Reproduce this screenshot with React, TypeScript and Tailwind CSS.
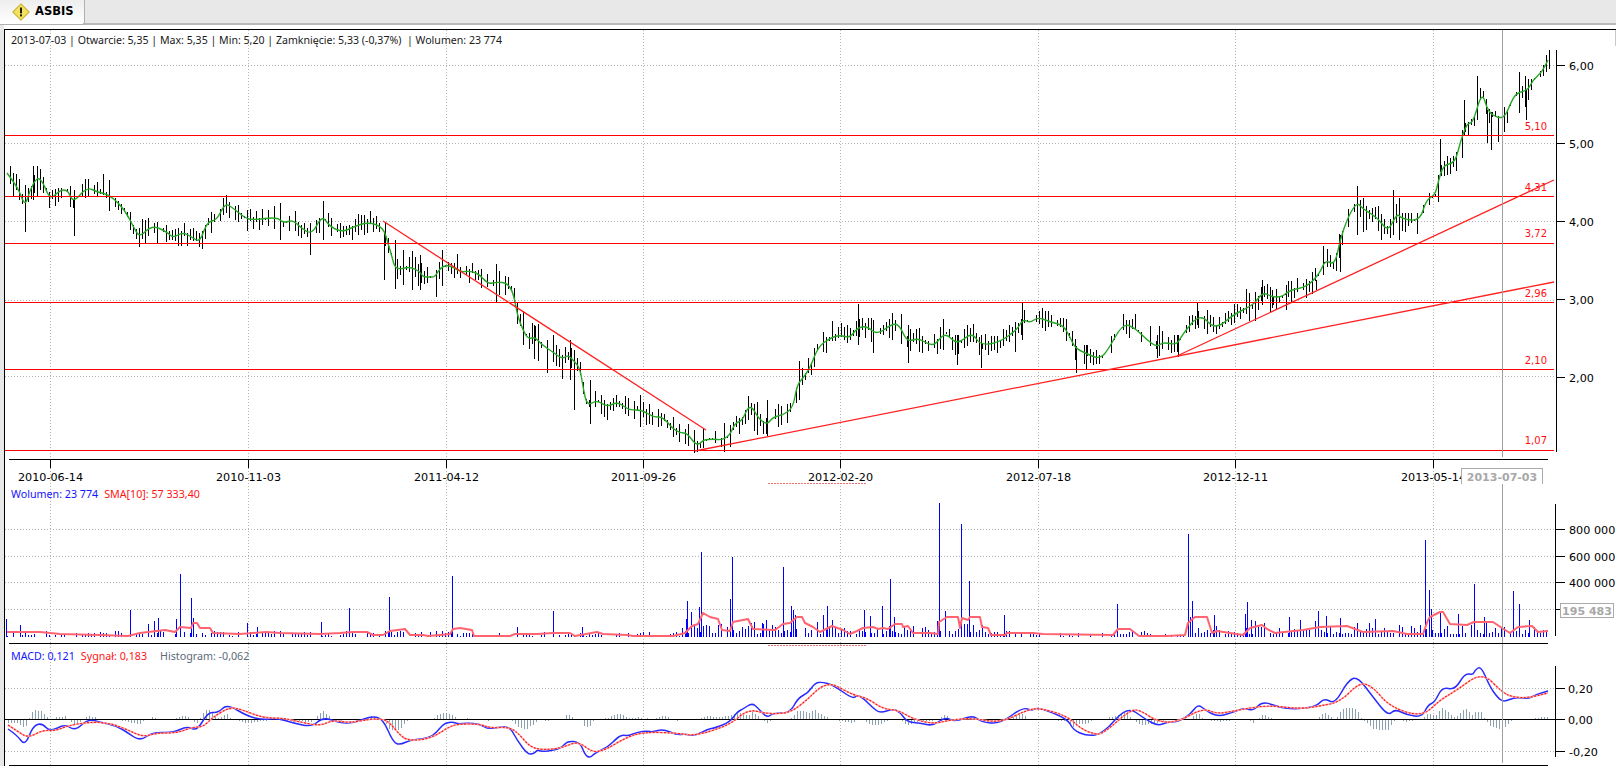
const SMA =
  "7,173 18,187 25,207 30,190 37,177 43,182 50,200 60,190 68,190 73,203 87,187 97,192 110,195 125,210 135,230 140,237 152,225 167,232 173,238 183,232 193,238 200,242 207,222 217,220 225,203 233,208 245,218 253,220 277,217 283,223 293,220 300,227 312,235 322,215 330,227 343,232 353,227 368,222 383,227 388,243 392,257 395,268 402,269 408,267 415,269 420,272 423,277 430,277 435,277 440,268 447,265 455,268 460,272 472,271 480,275 488,284 497,282 507,283 513,292 516,307 518,317 523,330 528,339 535,337 542,345 553,352 562,359 568,355 573,360 580,368 583,387 587,406 597,400 607,407 617,402 625,407 630,410 642,410 653,417 663,417 672,428 680,433 687,433 695,444 700,444 703,440 713,439 722,440 730,435 735,423 742,421 748,407 753,408 758,418 767,425 773,417 783,415 793,408 797,385 803,378 810,368 818,347 830,338 840,335 850,338 857,328 867,326 877,335 893,323 900,326 907,342 918,338 928,344 935,345 945,332 957,345 972,332 980,345 998,343 1017,330 1023,319 1030,323 1038,317 1050,322 1063,325 1070,337 1075,348 1087,354 1100,359 1108,350 1123,323 1135,328 1147,340 1157,347 1163,342 1177,345 1182,335 1200,313 1215,330 1233,315 1247,308 1255,303 1263,292 1272,297 1282,297 1290,290 1307,287 1320,273 1325,260 1335,265 1340,240 1348,217 1357,202 1363,209 1378,218 1388,232 1397,213 1402,219 1420,221 1426,200 1435,195 1438,183 1443,165 1455,163 1460,143 1467,123 1473,123 1482,91 1488,112 1498,118 1505,117 1512,100 1517,93 1528,90 1533,80 1542,72 1548,60";

const VOL_SMA =
  "7,632 40,632 60,634 100,635 128,636 140,633 165,630 175,632 180,627 191,628 193,623 197,623 200,628 210,628 213,633 240,634 266,632 280,633 320,634 340,633 353,632 367,632 373,635 383,635 390,631 405,629 410,635 423,635 428,636 440,635 450,634 453,629 460,628 472,630 474,636 510,636 515,634 537,634 553,633 570,633 575,636 597,632 603,634 627,635 633,636 673,636 685,633 692,626 698,624 703,613 710,617 718,619 722,630 730,631 733,622 748,619 753,629 775,630 783,624 790,623 797,617 802,617 805,623 813,627 820,632 832,626 843,630 850,634 857,631 863,628 873,627 878,629 883,628 888,629 895,624 902,624 903,627 908,626 913,633 930,633 938,634 939,622 947,617 958,617 960,628 962,618 968,620 970,617 980,617 982,627 988,628 991,635 1005,635 1007,633 1033,633 1043,634 1113,635 1118,629 1130,629 1139,636 1167,636 1185,635 1188,623 1195,617 1207,617 1212,633 1217,631 1243,635 1250,628 1262,625 1267,629 1275,633 1303,630 1320,627 1347,626 1363,632 1393,631 1407,634 1423,634 1428,620 1430,617 1440,612 1443,612 1450,624 1467,625 1474,622 1493,622 1502,628 1510,633 1518,627 1532,626 1538,632 1548,631";

const MACD =
  "8,729 17,735 25,746 33,726 42,723 50,732 65,724 75,731 88,719 100,722 117,726 128,733 140,741 153,732 173,733 187,726 197,731 208,712 218,713 227,704 247,716 263,720 277,718 293,723 312,727 323,717 340,723 353,723 372,716 383,719 393,742 400,745 410,740 423,739 433,736 440,728 445,723 453,722 458,724 467,723 480,724 488,729 500,727 510,727 517,740 528,755 535,753 537,750 545,752 562,748 567,741 580,742 585,755 590,758 595,753 608,747 618,737 623,735 628,736 638,732 647,731 653,732 663,729 677,735 685,734 695,736 708,729 715,728 730,722 737,712 743,709 752,703 758,708 767,718 773,713 790,713 798,698 808,693 815,683 822,682 833,685 853,699 857,695 863,698 873,708 880,713 893,709 900,712 907,722 920,723 933,726 945,717 955,722 973,715 981,722 1000,724 1023,707 1032,711 1038,707 1068,719 1073,730 1087,736 1103,734 1127,706 1145,719 1158,726 1167,722 1177,722 1190,715 1198,704 1205,710 1218,717 1233,712 1245,708 1253,711 1263,701 1280,708 1300,709 1317,706 1324,698 1335,704 1347,682 1357,676 1373,697 1388,716 1395,709 1407,715 1422,717 1428,705 1435,702 1442,687 1455,690 1465,673 1473,675 1475,670 1481,666 1490,687 1498,698 1504,702 1515,697 1528,699 1535,695 1548,691";

const SIGNAL =
  "8,725 17,731 28,738 43,730 55,731 67,726 88,722 110,723 128,730 143,737 157,733 177,733 193,727 203,727 213,717 230,707 243,710 263,718 283,718 300,722 320,726 333,720 350,723 370,719 383,719 390,723 400,735 407,740 423,740 437,735 447,728 457,724 480,724 490,728 510,727 520,735 530,747 543,750 562,748 578,741 593,753 607,749 625,738 643,732 677,733 695,736 730,725 748,709 768,714 790,713 807,700 820,687 830,684 837,686 853,695 867,698 883,709 898,710 913,719 933,724 950,720 973,718 1000,723 1027,710 1040,708 1067,716 1080,728 1093,734 1103,734 1130,710 1140,710 1158,722 1178,722 1203,708 1217,714 1233,711 1267,705 1300,709 1320,706 1340,702 1360,682 1373,687 1390,707 1422,717 1440,700 1457,690 1482,672 1502,692 1512,697 1528,698 1548,693";

// x,top,bottom of price bars that stick out of the noise
const PRICE_SPIKES = [
  [25, 185, 232], [33, 166, 200], [37, 166, 196], [74, 190, 236], [280, 205, 240], [323, 201, 240],
  [384, 232, 280], [395, 240, 289], [420, 255, 290], [534, 325, 359], [547, 340, 373], [553, 335, 362],
  [570, 340, 380], [574, 350, 410], [590, 380, 424], [640, 395, 427], [694, 430, 453], [703, 429, 448],
  [748, 396, 420], [767, 400, 436], [799, 361, 400], [858, 304, 345], [873, 320, 353], [908, 325, 363],
  [943, 319, 350], [957, 335, 365], [981, 335, 368], [1022, 303, 340], [1076, 346, 373], [1086, 345, 369],
  [1157, 335, 358], [1178, 335, 357], [1197, 303, 325], [1262, 280, 305], [1272, 290, 308], [1286, 285, 310],
  [1316, 280, 290], [1323, 246, 275], [1340, 235, 272], [1357, 186, 235], [1363, 198, 232], [1393, 190, 235],
  [1399, 198, 240], [1440, 139, 172], [1462, 130, 158], [1464, 100, 135], [1477, 76, 110], [1487, 110, 143],
  [1491, 112, 150], [1498, 118, 142], [1526, 90, 120], [1549, 50, 62], [1546, 55, 72],
];

// x,top of the tall volume bars
const VOL_SPIKES = [
  [6, 619], [20, 625], [130, 610], [148, 624], [154, 621], [158, 618], [176, 619], [180, 574], [191, 598],
  [193, 618], [247, 623], [257, 627], [321, 622], [349, 608], [389, 597], [452, 576], [517, 627], [553, 611],
  [582, 627], [686, 619], [687, 601], [691, 612], [699, 607], [701, 552], [730, 599], [732, 557], [754, 622],
  [762, 623], [766, 620], [783, 567], [791, 606], [793, 610], [795, 615], [823, 615], [827, 606], [864, 610],
  [870, 616], [882, 606], [890, 579], [894, 617], [939, 503], [945, 611], [961, 524], [969, 581], [1004, 615],
  [1117, 604], [1188, 534], [1190, 617], [1192, 601], [1214, 615], [1245, 614], [1247, 602], [1251, 620],
  [1289, 617], [1318, 611], [1326, 616], [1340, 618], [1425, 540], [1429, 590], [1431, 609], [1440, 612],
  [1458, 614], [1474, 584], [1484, 617], [1513, 591], [1519, 604], [1529, 620],
];

const V_GRID = [50, 248, 446, 643, 840, 1038, 1235, 1433];
const DATES = ["2010-06-14", "2010-11-03", "2011-04-12", "2011-09-26", "2012-02-20", "2012-07-18", "2012-12-11", "2013-05-14"];
const LEVELS = [
  { y: 135, label: "5,10", ly: 130 },
  { y: 196, label: "4,31", ly: 191 },
  { y: 243, label: "3,72", ly: 237 },
  { y: 302, label: "2,96", ly: 297 },
  { y: 369, label: "2,10", ly: 364 },
  { y: 450, label: "1,07", ly: 444 },
];

function parse(s: string) {
  return s.split(" ").map((p) => p.split(",").map(Number));
}

function at(pts: number[][], x: number) {
  if (x <= pts[0][0]) return pts[0][1];
  for (let i = 1; i < pts.length; i++) {
    if (x <= pts[i][0]) {
      const [x0, y0] = pts[i - 1];
      const [x1, y1] = pts[i];
      return y0 + ((y1 - y0) * (x - x0)) / (x1 - x0);
    }
  }
  return pts[pts.length - 1][1];
}

// rounds the corners of a polyline with quadratic segments through the midpoints
function smooth(s: string) {
  const p = parse(s);
  let d = `M${p[0][0]} ${p[0][1]}`;
  for (let i = 1; i < p.length - 1; i++) {
    const mx = (p[i][0] + p[i + 1][0]) / 2;
    const my = (p[i][1] + p[i + 1][1]) / 2;
    d += `Q${p[i][0]} ${p[i][1]} ${mx} ${my}`;
  }
  const last = p[p.length - 1];
  return `${d}L${last[0]} ${last[1]}`;
}

function rng(seed: number) {
  let s = seed;
  return () => {
    s = (s * 16807) % 2147483647;
    return s / 2147483647;
  };
}

function priceBars() {
  const pts = parse(SMA);
  const r = rng(4711);
  let d = "";
  for (let x = 7; x <= 1549; x += 3) {
    if (r() < 0.14) continue;
    const y = at(pts, x);
    const quiet = r() < 0.08;
    const k = r() < 0.18 ? 1.7 : 1;
    const up = quiet ? 1 : (1 + r() * 11) * k;
    const down = quiet ? 1 : (1 + r() * 12) * k;
    // nothing but the low itself reaches under the 1,07 line
    d += `M${x + 0.5} ${Math.round(y - up)}V${Math.min(452, Math.round(y + down))}`;
  }
  for (const [x, a, b] of PRICE_SPIKES) d += `M${x + 0.5} ${a}V${b}`;
  return d;
}

function volumeBars() {
  const r = rng(99);
  let d = "";
  for (let x = 7; x <= 1548; x += 3) {
    const dense = (x > 680 && x < 1000) || x > 1192;
    const sparse = x > 1040 && x < 1110;
    if (r() > (dense ? 0.92 : sparse ? 0.35 : 0.6)) continue;
    const h = dense ? 3 + r() * r() * 16 : 1 + r() * 5;
    d += `M${x + 0.5} ${Math.round(637 - h)}V637`;
  }
  for (const [x, t] of VOL_SPIKES) d += `M${x + 0.5} ${t}V637`;
  return d;
}

function histogramBars() {
  const m = parse(MACD);
  const s = parse(SIGNAL);
  let d = "";
  for (let x = 8; x <= 1548; x += 3) {
    const h = at(s, x) - at(m, x);
    if (Math.abs(h) < 1) continue;
    const top = Math.round(719 - Math.max(-11, Math.min(11, h)));
    d += `M${x + 0.5} 719V${top}`;
  }
  return d;
}

function HLine({ y, x1 = 5, x2 = 1554, className = "stroke-[#b4b4b4]", dash }: { y: number; x1?: number; x2?: number; className?: string; dash?: string }) {
  return <line x1={x1} x2={x2} y1={y + 0.5} y2={y + 0.5} className={className} strokeDasharray={dash} shapeRendering="crispEdges" />;
}

function VLine({ x, y1, y2, className = "stroke-black", dash }: { x: number; y1: number; y2: number; className?: string; dash?: string }) {
  return <line x1={x + 0.5} x2={x + 0.5} y1={y1} y2={y2} className={className} strokeDasharray={dash} shapeRendering="crispEdges" />;
}

function Grid({ y1, y2, rows }: { y1: number; y2: number; rows: number[] }) {
  return (
    <>
      {rows.map((y) => (
        <HLine key={y} y={y} dash="1 2" />
      ))}
      {V_GRID.map((x) => (
        <VLine key={x} x={x} y1={y1} y2={y2} className="stroke-[#b4b4b4]" dash="1 2" />
      ))}
    </>
  );
}

function Tick({ y, label, x = 1569 }: { y: number; label?: string; x?: number }) {
  return (
    <>
      <HLine y={y} x1={1556} x2={1565} className="stroke-black" />
      {label && (
        <text x={x} y={y + 4.5} className="fill-black font-['DejaVu_Sans'] text-[11.2px]">
          {label}
        </text>
      )}
    </>
  );
}

function PricePane() {
  return (
    <div className="relative h-[456px]">
      <svg viewBox="5 30 1611 456" className="absolute inset-0 block h-full w-full">
        <Grid y1={30} y2={486} rows={[65, 143, 221, 300, 376]} />
        <path d={priceBars()} className="fill-none stroke-black" shapeRendering="crispEdges" />
        <path d={smooth(SMA)} className="fill-none stroke-[#26a826] stroke-[1.4]" strokeLinejoin="round" />
        {LEVELS.map((l) => (
          <HLine key={l.y} y={l.y} className="stroke-[#ff0000]" />
        ))}
        <line x1="383" y1="221" x2="706" y2="430" className="stroke-[#ff2020] stroke-[1.3]" />
        <line x1="695" y1="451" x2="1554" y2="282" className="stroke-[#ff2020] stroke-[1.3]" />
        <line x1="1177" y1="356" x2="1554" y2="180" className="stroke-[#ff2020] stroke-[1.3]" />
        {LEVELS.map((l) => (
          <text key={l.label} x={1547} y={l.ly} textAnchor="end" className="fill-[#ff1010] font-['DejaVu_Sans'] text-[10px]">
            {l.label}
          </text>
        ))}
        <VLine x={1502} y1={30} y2={457} className="stroke-[#a0a0a0]" />

        <VLine x={1556} y1={50} y2={452} />
        <Tick y={65} label="6,00" />
        <Tick y={143} label="5,00" />
        <Tick y={221} label="4,00" />
        <Tick y={299} label="3,00" />
        <Tick y={377} label="2,00" />

        <HLine y={459} x1={9} x2={1548} className="stroke-black" />
        {V_GRID.map((x, i) => (
          <g key={x}>
            <VLine x={x} y1={459} y2={468} />
            <text x={x + 0.5} y={481} textAnchor="middle" className="fill-black font-['DejaVu_Sans'] text-[11.2px]">
              {DATES[i]}
            </text>
          </g>
        ))}
        <HLine y={483} x1={768} x2={867} className="stroke-[#f07070]" dash="2 1" />
        <rect x="1461.5" y="468.5" width="81" height="16" className="fill-white stroke-[#aaaaaa]" />
        <line x1="1461" y1="484.5" x2="1543" y2="484.5" className="stroke-white" />
        <VLine x={1502} y1={484} y2={486} className="stroke-[#a0a0a0]" />
        <text x={1502} y={481} textAnchor="middle" className="fill-[#a8a8a8] font-['DejaVu_Sans'] text-[11px] font-bold">
          2013-07-03
        </text>
        <rect x="1615" y="30" width="1" height="16" className="fill-[#c8c8c8]" />
      </svg>
      <div className="relative whitespace-pre pl-[6px] pt-[3px] font-['Noto_Sans'] text-[10.6px] leading-[14px] text-[#1a1a1a]">
        2013-07-03 | Otwarcie: 5,35 | Max: 5,35 | Min: 5,20 | Zamknięcie: 5,33 (-0,37%)  | Wolumen: 23 774
      </div>
    </div>
  );
}

function VolumePane() {
  return (
    <div className="relative h-[158px]">
      <svg viewBox="5 486 1611 158" className="absolute inset-0 block h-full w-full">
        <Grid y1={486} y2={644} rows={[529, 556, 582, 609]} />
        <path d={volumeBars()} className="fill-none stroke-[#0000ff]" shapeRendering="crispEdges" />
        <polyline points={VOL_SMA} className="fill-none stroke-[#ff6470] stroke-2" strokeLinejoin="round" />
        <VLine x={1502} y1={486} y2={644} className="stroke-[#a0a0a0]" />
        <VLine x={1555} y1={504} y2={636} />
        <Tick y={529} label="800 000" />
        <Tick y={556} label="600 000" />
        <Tick y={582} label="400 000" />
        <Tick y={609} />
        <rect x="1560.5" y="603.5" width="53" height="14" className="fill-white stroke-[#aaaaaa]" />
        <text x={1587} y={614.5} textAnchor="middle" className="fill-[#a8a8a8] font-['DejaVu_Sans'] text-[11px] font-bold">
          195 483
        </text>
        <HLine y={643} x1={9} x2={1548} className="stroke-black" />
      </svg>
      <div className="relative flex gap-[6px] pl-[6px] pt-[1px] font-['Noto_Sans'] text-[10.7px] leading-[14px]">
        <span className="text-[#1414ff]">Wolumen: 23 774</span>
        <span className="text-[#ff1414]">SMA[10]: 57 333,40</span>
      </div>
    </div>
  );
}

function MacdPane() {
  return (
    <div className="relative h-[122px]">
      <svg viewBox="5 644 1611 122" className="absolute inset-0 block h-full w-full">
        <Grid y1={644} y2={765} rows={[688, 751]} />
        <HLine y={645} x1={768} x2={867} className="stroke-[#f07070]" dash="2 1" />
        <path d={histogramBars()} className="fill-none stroke-[#8ba2ae]" shapeRendering="crispEdges" />
        <HLine y={719} x1={5} x2={1556} className="stroke-black" />
        <path d={smooth(MACD)} className="fill-none stroke-[#2a2aff] stroke-[1.5]" strokeLinejoin="round" />
        <path d={smooth(SIGNAL)} className="fill-none stroke-[#ffb0b0] stroke-[1.6]" strokeLinejoin="round" />
        <path d={smooth(SIGNAL)} className="fill-none stroke-[#ff1e1e] stroke-[1.2]" strokeDasharray="2 1.5" strokeLinejoin="round" />
        <VLine x={1502} y1={644} y2={763} className="stroke-[#a0a0a0]" />
        <VLine x={1555} y1={666} y2={757} />
        <Tick y={688} label="0,20" x={1568} />
        <Tick y={719} label="0,00" x={1568} />
        <Tick y={751} label="-0,20" x={1569} />
        <HLine y={765} x1={9} x2={1548} className="stroke-black" />
      </svg>
      <div className="relative flex pl-[6px] pt-[5px] font-['Noto_Sans'] text-[10.7px] leading-[14px]">
        <span className="text-[#1414ff]">MACD: 0,121</span>
        <span className="ml-[6px] text-[#ff1414]">Sygnał: 0,183</span>
        <span className="ml-[13px] text-[#5b6b78]">Histogram: -0,062</span>
      </div>
    </div>
  );
}

export default function App() {
  return (
    <div className="flex h-[766px] w-full flex-col overflow-hidden bg-white">
      <div className="flex h-[25px] shrink-0 border-b-2 border-[#b9b9b9] bg-[#e8e8e8]">
        <div className="-mb-[2px] flex w-[85px] items-center gap-[5px] rounded-br-[3px] border-r border-b border-[#b0b0b0] bg-gradient-to-b from-[#eeeeee] to-white pl-[12px]">
          <svg viewBox="0 0 16 16" className="h-[18px] w-[18px] shrink-0">
            <path d="M8 .8 15.2 8 8 15.2.8 8Z" fill="#f4e260" stroke="#c9b53c" strokeLinejoin="round" />
            <rect x="7.1" y="4" width="1.8" height="5.2" fill="#1c1c00" />
            <rect x="7.1" y="10.1" width="1.8" height="1.8" fill="#1c1c00" />
          </svg>
          <span className="font-['DejaVu_Sans'] text-[11.5px] font-bold text-black">ASBIS</span>
        </div>
      </div>
      <div className="flex flex-1">
        <div className="w-[4px] bg-[#e8e8e8]" />
        <div className="mt-[4px] flex-1 border-t border-l border-black">
          <PricePane />
          <VolumePane />
          <MacdPane />
        </div>
      </div>
    </div>
  );
}
